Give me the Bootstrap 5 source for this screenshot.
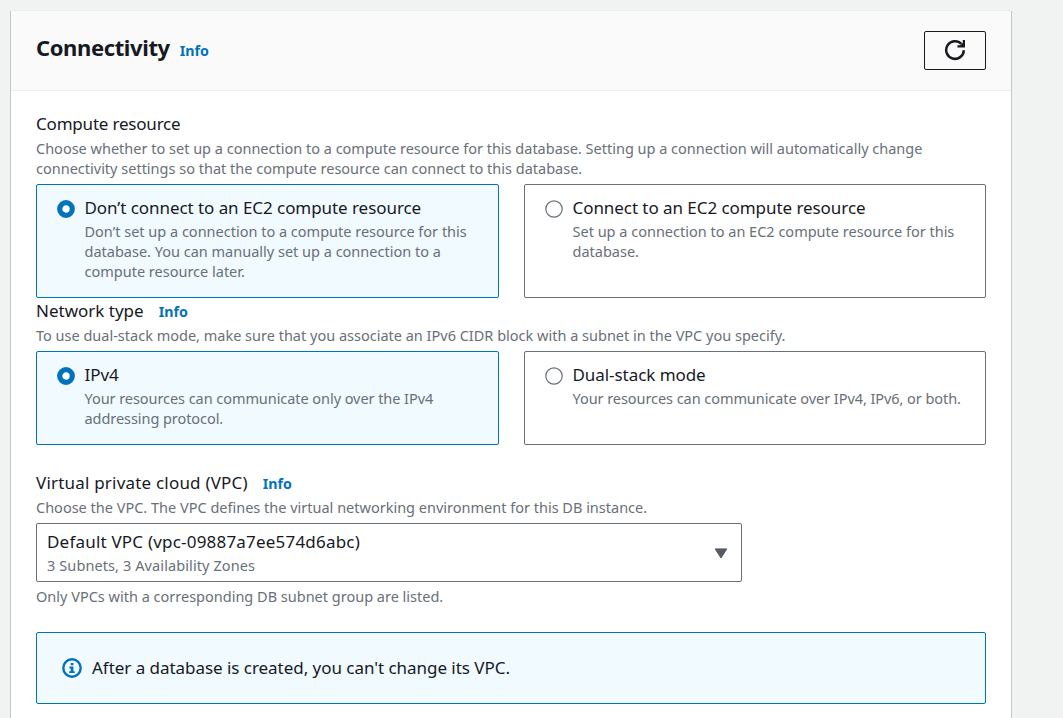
<!DOCTYPE html>
<html lang="en">
<head>
<meta charset="utf-8">
<meta name="viewport" content="width=device-width, initial-scale=1">
<title>Connectivity</title>
<link href="https://cdn.jsdelivr.net/npm/bootstrap@5.3.0/dist/css/bootstrap.min.css" rel="stylesheet">
<style>
body{background:#f1f3f3;color:#16191f;font-family:"Noto Sans",sans-serif;font-size:17px;line-height:25px;height:100vh;overflow:hidden;padding:11px 52px 0 11px}
.panel{height:calc(100vh - 11px);background:#fff;box-shadow:-1px 0 0 #c3c7c7,1px 0 0 #c3c7c7,0 -1px 0 #eaeded}
.panel-head{height:80px;background:#fafafa;border-bottom:1px solid #eaeded;padding:0 25px}
.panel-body{padding:20px 25px 0}
.panel-title{font-size:22px;line-height:28px;font-weight:700;letter-spacing:-.38px;margin:-5px 0 0}
.panel-head .info{margin-left:10px}
.info{font-size:14.2px;font-weight:700;color:#0073bb;text-decoration:none}
section>.d-flex>.info{margin-left:15px}
.hint{font-size:14.5px;line-height:20px;color:#687078}
.intro{margin:1px 0 6px}
.intro.first{margin-top:2px}
.refresh{width:62px;height:39px;border:1px solid #16191f;border-radius:2px;padding:0 0 2px}
.tiles{display:grid;grid-template-columns:463px 462px;gap:25px}
.tile{border:1px solid #687078;border-radius:2px;padding:10px 15px 16px 20px;column-gap:9.5px}
.tile.chosen,.notice{border:1px solid #0073bb;background:#f1faff;border-radius:2px}
.tile svg{margin-top:5px}
.tile.short{height:94px}
.tile.short .hint{letter-spacing:-.06px}
.tile-title{line-height:26px;letter-spacing:-.06px}
.vpc{padding-top:25px}
.picker{width:706px;height:59px;border:1px solid #687078;border-radius:2px;padding:0 13px 1px 10px;background:#fff}
.picker .hint{margin-top:1px;letter-spacing:.1px}
.picker svg{margin-top:3px}
.wide{letter-spacing:.2px}
.tight{letter-spacing:-.2px}
.below{margin-top:4px}
.notice{height:72px;margin-top:26px;padding:0 25px;column-gap:10px}
.notice span{margin-top:-2px;letter-spacing:-.04px}
</style>
</head>
<body>
<main class="panel">
  <header class="panel-head d-flex align-items-center justify-content-between">
    <div class="d-flex align-items-baseline">
      <h1 class="panel-title">Connectivity</h1>
      <a class="info" href="#">Info</a>
    </div>
    <button class="btn refresh d-flex align-items-center justify-content-center" aria-label="Refresh">
      <svg width="22" height="22" viewBox="0 0 22 22" fill="none" stroke="#16191f"><path stroke-width="2.5" d="M19.8 11.2a8.8 8.8 0 1 1-2.4-6.2"/><path fill="#16191f" stroke="none" d="M21 1v7.6h-7.6V6.3h3L18.7 4V1z"/></svg>
    </button>
  </header>

  <div class="panel-body">
    <section>
      <div class="tight">Compute resource</div>
      <div class="hint intro first">Choose whether to set up a connection to a compute resource for this database. Setting up a connection will automatically change<br>connectivity settings so that the compute resource can connect to this database.</div>
      <div class="tiles">
        <div class="tile chosen d-flex align-items-start">
          <svg class="flex-shrink-0" width="18" height="18"><circle cx="9" cy="9" r="6.3" fill="#fff" stroke="#0073bb" stroke-width="5.2"/></svg>
          <div><div class="tile-title">Don’t connect to an EC2 compute resource</div>
          <div class="hint">Don’t set up a connection to a compute resource for this<br>database. You can manually set up a connection to a<br>compute resource later.</div></div>
        </div>
        <div class="tile d-flex align-items-start">
          <svg class="flex-shrink-0" width="18" height="18"><circle cx="9" cy="9" r="8.2" fill="#fff" stroke="#687078" stroke-width="1.2"/></svg>
          <div><div class="tile-title">Connect to an EC2 compute resource</div>
          <div class="hint">Set up a connection to an EC2 compute resource for this<br>database.</div></div>
        </div>
      </div>
    </section>

    <section>
      <div class="d-flex align-items-baseline">Network type<a class="info" href="#">Info</a></div>
      <div class="hint intro">To use dual-stack mode, make sure that you associate an IPv6 CIDR block with a subnet in the VPC you specify.</div>
      <div class="tiles">
        <div class="tile short chosen d-flex align-items-start">
          <svg class="flex-shrink-0" width="18" height="18"><circle cx="9" cy="9" r="6.3" fill="#fff" stroke="#0073bb" stroke-width="5.2"/></svg>
          <div><div class="tile-title">IPv4</div>
          <div class="hint">Your resources can communicate only over the IPv4<br>addressing protocol.</div></div>
        </div>
        <div class="tile short d-flex align-items-start">
          <svg class="flex-shrink-0" width="18" height="18"><circle cx="9" cy="9" r="8.2" fill="#fff" stroke="#687078" stroke-width="1.2"/></svg>
          <div><div class="tile-title">Dual-stack mode</div>
          <div class="hint">Your resources can communicate over IPv4, IPv6, or both.</div></div>
        </div>
      </div>
    </section>

    <section class="vpc">
      <div class="d-flex align-items-baseline"><span class="wide">Virtual private cloud (VPC)</span><a class="info" href="#">Info</a></div>
      <div class="hint intro">Choose the VPC. The VPC defines the virtual networking environment for this DB instance.</div>
      <div class="picker d-flex align-items-center justify-content-between">
        <div><div class="wide">Default VPC (vpc-09887a7ee574d6abc)</div><div class="hint">3 Subnets, 3 Availability Zones</div></div>
        <svg width="14" height="11" viewBox="0 0 14 11"><path fill="#545b64" stroke="#545b64" stroke-linejoin="round" d="M1.2.9h11.6L7 10z"/></svg>
      </div>
      <div class="hint below">Only VPCs with a corresponding DB subnet group are listed.</div>
    </section>

    <div class="notice d-flex align-items-center" role="status">
      <svg class="flex-shrink-0" width="20" height="20" viewBox="0 0 20 20"><circle cx="10" cy="10" r="8.7" fill="none" stroke="#0073bb" stroke-width="2.4"/><path fill="#0073bb" d="M8.7 5h2.8v2.3H8.7zM7.4 8.6h4v4.6h1.4V15H7.2v-1.8h1.5v-2.8H7.4z"/></svg>
      <span>After a database is created, you can't change its VPC.</span>
    </div>
  </div>
</main>
<script src="https://cdn.jsdelivr.net/npm/bootstrap@5.3.0/dist/js/bootstrap.bundle.min.js"></script>
</body>
</html>
